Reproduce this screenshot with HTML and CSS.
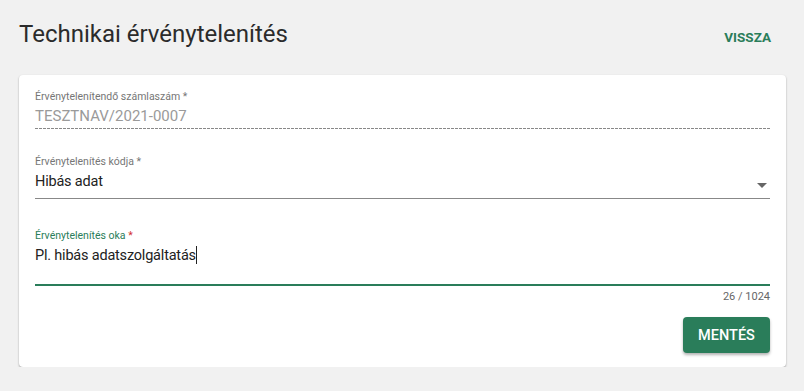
FILE: index.html
```html
<!DOCTYPE html>
<html lang="hu">
<head>
    <meta charset="UTF-8">
    <title>Technikai érvénytelenítés</title>
    <link rel="stylesheet" href="styles.css">
</head>
<body>
    <div class="header">
        <h1>Technikai érvénytelenítés</h1>
        <a class="back" href="#">Vissza</a>
    </div>

    <div class="card">
        <div class="field disabled">
            <label>Érvénytelenítendő számlaszám *</label>
            <div class="input">TESZTNAV/2021-0007</div>
        </div>

        <div class="field select">
            <label>Érvénytelenítés kódja *</label>
            <div class="input">Hibás adat <span class="arrow"></span></div>
        </div>

        <div class="field focused">
            <label>Érvénytelenítés oka <span class="req">*</span></label>
            <div class="input">Pl. hibás adatszolgáltatás<span class="caret"></span></div>
            <div class="counter">26 / 1024</div>
        </div>

        <div class="actions">
            <button class="btn">Mentés</button>
        </div>
    </div>
</body>
</html>
```

FILE: styles.css
```css
body {
    font-family: Roboto, "Noto Sans", sans-serif;
    margin: 0;
    padding: 0 18px 0 19px;
    background-color: #f1f1f1;
    color: #222;
}
.header {
    display: flex;
    justify-content: space-between;
    align-items: center;
    height: 75px;
}
h1 {
    margin: 0;
    font-size: 24px;
    font-weight: 400;
    color: #2b2b2b;
    padding-bottom: 8px;
}
.back {
    color: #2a7d5a;
    font-size: 13.5px;
    font-weight: 700;
    text-transform: uppercase;
    text-decoration: none;
    margin-right: 15px;
    padding-bottom: 1px;
}
.card {
    background-color: #fff;
    border-radius: 4px;
    box-shadow: 0 1px 2px rgba(0, 0, 0, 0.35);
    padding: 15px 16px 14px 16px;
}
.field label {
    display: block;
    font-size: 10.5px;
    color: #767676;
    line-height: 14px;
}
.field .input {
    font-size: 14.5px;
    letter-spacing: -0.2px;
    line-height: 20px;
    padding: 2px 0;
    border-bottom: 1px solid #888;
    position: relative;
}
.field.disabled .input {
    font-size: 15px;
    letter-spacing: 0;
    color: #9a9a9a;
    border-bottom: none;
    padding-bottom: 3px;
    background-image: linear-gradient(to right, #888 0, #888 75%, transparent 75%);
    background-size: 4px 1px;
    background-repeat: repeat-x;
    background-position: bottom left;
}
.field.select {
    margin-top: 26px;
}
.field.select .input {
    padding: 3px 0 6px;
}
.arrow {
    position: absolute;
    right: 3px;
    top: 14px;
    border-left: 5px solid transparent;
    border-right: 5px solid transparent;
    border-top: 5px solid #666;
}
.field.focused {
    margin-top: 30px;
}
.field.focused label {
    color: #2a7d5a;
}
.req {
    color: #d32f2f;
}
.field.focused .input {
    border-bottom: 2px solid #2a7d5a;
    padding: 3px 0 18px;
}
.caret {
    display: inline-block;
    width: 1px;
    height: 18px;
    background-color: #222;
    vertical-align: -4px;
}
.counter {
    text-align: right;
    font-size: 11px;
    line-height: 14px;
    color: #666;
    margin-top: 4px;
}
.actions {
    display: flex;
    justify-content: flex-end;
    margin-top: 13px;
}
.btn {
    background-color: #2a7d5a;
    color: #fff;
    border: none;
    border-radius: 4px;
    font-family: Roboto, sans-serif;
    font-size: 14.5px;
    font-weight: 500;
    text-transform: uppercase;
    width: 87px;
    height: 36px;
    box-shadow: 0 2px 3px rgba(0, 0, 0, 0.3);
}
```
